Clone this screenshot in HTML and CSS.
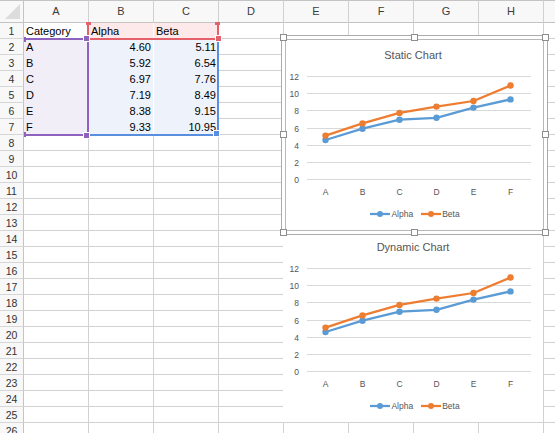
FILE: index.html
```html
<!DOCTYPE html>
<html lang="en">
<head>
<meta charset="utf-8">
<title>Sheet with charts</title>
<link rel="stylesheet" href="styles.css">
</head>
<body>
<div class="sheet">
  <div class="row head">
    <div class="rh corner"></div>
    <div class="ch">A</div><div class="ch">B</div><div class="ch">C</div><div class="ch">D</div><div class="ch">E</div><div class="ch">F</div><div class="ch">G</div><div class="ch">H</div><div class="ch"></div>
  </div>
  <div class="row"><div class="rh">1</div><div class="c">Category</div><div class="c pink split">Alpha</div><div class="c pink">Beta</div><div class="c"></div><div class="c"></div><div class="c"></div><div class="c"></div><div class="c"></div><div class="c"></div></div>
  <div class="row"><div class="rh">2</div><div class="c purple">A</div><div class="c blue split num">4.60</div><div class="c blue num">5.11</div><div class="c"></div><div class="c"></div><div class="c"></div><div class="c"></div><div class="c"></div><div class="c"></div></div>
  <div class="row"><div class="rh">3</div><div class="c purple">B</div><div class="c blue split num">5.92</div><div class="c blue num">6.54</div><div class="c"></div><div class="c"></div><div class="c"></div><div class="c"></div><div class="c"></div><div class="c"></div></div>
  <div class="row"><div class="rh">4</div><div class="c purple">C</div><div class="c blue split num">6.97</div><div class="c blue num">7.76</div><div class="c"></div><div class="c"></div><div class="c"></div><div class="c"></div><div class="c"></div><div class="c"></div></div>
  <div class="row"><div class="rh">5</div><div class="c purple">D</div><div class="c blue split num">7.19</div><div class="c blue num">8.49</div><div class="c"></div><div class="c"></div><div class="c"></div><div class="c"></div><div class="c"></div><div class="c"></div></div>
  <div class="row"><div class="rh">6</div><div class="c purple">E</div><div class="c blue split num">8.38</div><div class="c blue num">9.15</div><div class="c"></div><div class="c"></div><div class="c"></div><div class="c"></div><div class="c"></div><div class="c"></div></div>
  <div class="row"><div class="rh">7</div><div class="c purple">F</div><div class="c blue split num">9.33</div><div class="c blue num">10.95</div><div class="c"></div><div class="c"></div><div class="c"></div><div class="c"></div><div class="c"></div><div class="c"></div></div>
  <div class="row"><div class="rh">8</div><div class="c"></div><div class="c"></div><div class="c"></div><div class="c"></div><div class="c"></div><div class="c"></div><div class="c"></div><div class="c"></div><div class="c"></div></div>
  <div class="row"><div class="rh">9</div><div class="c"></div><div class="c"></div><div class="c"></div><div class="c"></div><div class="c"></div><div class="c"></div><div class="c"></div><div class="c"></div><div class="c"></div></div>
  <div class="row"><div class="rh">10</div><div class="c"></div><div class="c"></div><div class="c"></div><div class="c"></div><div class="c"></div><div class="c"></div><div class="c"></div><div class="c"></div><div class="c"></div></div>
  <div class="row"><div class="rh">11</div><div class="c"></div><div class="c"></div><div class="c"></div><div class="c"></div><div class="c"></div><div class="c"></div><div class="c"></div><div class="c"></div><div class="c"></div></div>
  <div class="row"><div class="rh">12</div><div class="c"></div><div class="c"></div><div class="c"></div><div class="c"></div><div class="c"></div><div class="c"></div><div class="c"></div><div class="c"></div><div class="c"></div></div>
  <div class="row"><div class="rh">13</div><div class="c"></div><div class="c"></div><div class="c"></div><div class="c"></div><div class="c"></div><div class="c"></div><div class="c"></div><div class="c"></div><div class="c"></div></div>
  <div class="row"><div class="rh">14</div><div class="c"></div><div class="c"></div><div class="c"></div><div class="c"></div><div class="c"></div><div class="c"></div><div class="c"></div><div class="c"></div><div class="c"></div></div>
  <div class="row"><div class="rh">15</div><div class="c"></div><div class="c"></div><div class="c"></div><div class="c"></div><div class="c"></div><div class="c"></div><div class="c"></div><div class="c"></div><div class="c"></div></div>
  <div class="row"><div class="rh">16</div><div class="c"></div><div class="c"></div><div class="c"></div><div class="c"></div><div class="c"></div><div class="c"></div><div class="c"></div><div class="c"></div><div class="c"></div></div>
  <div class="row"><div class="rh">17</div><div class="c"></div><div class="c"></div><div class="c"></div><div class="c"></div><div class="c"></div><div class="c"></div><div class="c"></div><div class="c"></div><div class="c"></div></div>
  <div class="row"><div class="rh">18</div><div class="c"></div><div class="c"></div><div class="c"></div><div class="c"></div><div class="c"></div><div class="c"></div><div class="c"></div><div class="c"></div><div class="c"></div></div>
  <div class="row"><div class="rh">19</div><div class="c"></div><div class="c"></div><div class="c"></div><div class="c"></div><div class="c"></div><div class="c"></div><div class="c"></div><div class="c"></div><div class="c"></div></div>
  <div class="row"><div class="rh">20</div><div class="c"></div><div class="c"></div><div class="c"></div><div class="c"></div><div class="c"></div><div class="c"></div><div class="c"></div><div class="c"></div><div class="c"></div></div>
  <div class="row"><div class="rh">21</div><div class="c"></div><div class="c"></div><div class="c"></div><div class="c"></div><div class="c"></div><div class="c"></div><div class="c"></div><div class="c"></div><div class="c"></div></div>
  <div class="row"><div class="rh">22</div><div class="c"></div><div class="c"></div><div class="c"></div><div class="c"></div><div class="c"></div><div class="c"></div><div class="c"></div><div class="c"></div><div class="c"></div></div>
  <div class="row"><div class="rh">23</div><div class="c"></div><div class="c"></div><div class="c"></div><div class="c"></div><div class="c"></div><div class="c"></div><div class="c"></div><div class="c"></div><div class="c"></div></div>
  <div class="row"><div class="rh">24</div><div class="c"></div><div class="c"></div><div class="c"></div><div class="c"></div><div class="c"></div><div class="c"></div><div class="c"></div><div class="c"></div><div class="c"></div></div>
  <div class="row"><div class="rh">25</div><div class="c"></div><div class="c"></div><div class="c"></div><div class="c"></div><div class="c"></div><div class="c"></div><div class="c"></div><div class="c"></div><div class="c"></div></div>
  <div class="row"><div class="rh">26</div><div class="c"></div><div class="c"></div><div class="c"></div><div class="c"></div><div class="c"></div><div class="c"></div><div class="c"></div><div class="c"></div><div class="c"></div></div>

  <div class="rng rng-blue"><span class="hd hd-blue-br"></span></div>
  <div class="rng rng-red"><span class="cap cap-l"></span><span class="cap cap-r"></span><span class="hd hd-red-br"></span></div>
  <div class="rng rng-purple"><span class="tick tick-t"></span><span class="tick tick-b"></span><span class="hd hd-purple-tr"></span><span class="hd hd-purple-br"></span></div>

  <div class="chart chart2">
    <div class="chart-title">Dynamic Chart</div>
    <svg class="plot" viewBox="0 0 260 130" width="260" height="130">
      <g stroke="#d9d9d9" stroke-width="1">
        <line x1="24" x2="248" y1="5.5" y2="5.5"/><line x1="24" x2="248" y1="22.5" y2="22.5"/><line x1="24" x2="248" y1="39.5" y2="39.5"/><line x1="24" x2="248" y1="57.5" y2="57.5"/><line x1="24" x2="248" y1="74.5" y2="74.5"/><line x1="24" x2="248" y1="91.5" y2="91.5"/><line x1="24" x2="248" y1="108.5" y2="108.5"/>
      </g>
      <g class="ax" text-anchor="end">
        <text x="16" y="8.5">12</text><text x="16" y="25.5">10</text><text x="16" y="42.5">8</text><text x="16" y="60.5">6</text><text x="16" y="77.5">4</text><text x="16" y="94.5">2</text><text x="16" y="111.5">0</text>
      </g>
      <g class="ax" text-anchor="middle">
        <text x="42.5" y="124.3">A</text><text x="79.5" y="124.3">B</text><text x="116.5" y="124.3">C</text><text x="153.5" y="124.3">D</text><text x="190.5" y="124.3">E</text><text x="227.5" y="124.3">F</text>
      </g>
      <polyline class="s-alpha" points="42.5,69.0 79.5,57.7 116.5,48.7 153.5,46.8 190.5,36.6 227.5,28.4"/>
      <g fill="#5b9bd5"><circle cx="42.5" cy="69.0" r="3.2"/><circle cx="79.5" cy="57.7" r="3.2"/><circle cx="116.5" cy="48.7" r="3.2"/><circle cx="153.5" cy="46.8" r="3.2"/><circle cx="190.5" cy="36.6" r="3.2"/><circle cx="227.5" cy="28.4" r="3.2"/></g>
      <polyline class="s-beta" points="42.5,64.6 79.5,52.4 116.5,41.9 153.5,35.6 190.5,30.0 227.5,14.5"/>
      <g fill="#ed7d31"><circle cx="42.5" cy="64.6" r="3.2"/><circle cx="79.5" cy="52.4" r="3.2"/><circle cx="116.5" cy="41.9" r="3.2"/><circle cx="153.5" cy="35.6" r="3.2"/><circle cx="190.5" cy="30.0" r="3.2"/><circle cx="227.5" cy="14.5" r="3.2"/></g>
    </svg>
    <div class="legend">
      <span class="lg-item"><svg class="lg-key" viewBox="0 0 20 8" width="20" height="8"><line x1="0" x2="20" y1="4" y2="4" stroke="#5b9bd5" stroke-width="2.25"/><circle cx="10" cy="4" r="3" fill="#5b9bd5"/></svg>Alpha</span>
      <span class="lg-item"><svg class="lg-key" viewBox="0 0 20 8" width="20" height="8"><line x1="0" x2="20" y1="4" y2="4" stroke="#ed7d31" stroke-width="2.25"/><circle cx="10" cy="4" r="3" fill="#ed7d31"/></svg>Beta</span>
    </div>
  </div>

  <div class="chart chart1">
    <div class="chart-title">Static Chart</div>
    <svg class="plot" viewBox="0 0 260 130" width="260" height="130">
      <g stroke="#d9d9d9" stroke-width="1">
        <line x1="24" x2="248" y1="5.5" y2="5.5"/><line x1="24" x2="248" y1="22.5" y2="22.5"/><line x1="24" x2="248" y1="39.5" y2="39.5"/><line x1="24" x2="248" y1="57.5" y2="57.5"/><line x1="24" x2="248" y1="74.5" y2="74.5"/><line x1="24" x2="248" y1="91.5" y2="91.5"/><line x1="24" x2="248" y1="108.5" y2="108.5"/>
      </g>
      <g class="ax" text-anchor="end">
        <text x="16" y="8.5">12</text><text x="16" y="25.5">10</text><text x="16" y="42.5">8</text><text x="16" y="60.5">6</text><text x="16" y="77.5">4</text><text x="16" y="94.5">2</text><text x="16" y="111.5">0</text>
      </g>
      <g class="ax" text-anchor="middle">
        <text x="42.5" y="124.3">A</text><text x="79.5" y="124.3">B</text><text x="116.5" y="124.3">C</text><text x="153.5" y="124.3">D</text><text x="190.5" y="124.3">E</text><text x="227.5" y="124.3">F</text>
      </g>
      <polyline class="s-alpha" points="42.5,69.0 79.5,57.7 116.5,48.7 153.5,46.8 190.5,36.6 227.5,28.4"/>
      <g fill="#5b9bd5"><circle cx="42.5" cy="69.0" r="3.2"/><circle cx="79.5" cy="57.7" r="3.2"/><circle cx="116.5" cy="48.7" r="3.2"/><circle cx="153.5" cy="46.8" r="3.2"/><circle cx="190.5" cy="36.6" r="3.2"/><circle cx="227.5" cy="28.4" r="3.2"/></g>
      <polyline class="s-beta" points="42.5,64.6 79.5,52.4 116.5,41.9 153.5,35.6 190.5,30.0 227.5,14.5"/>
      <g fill="#ed7d31"><circle cx="42.5" cy="64.6" r="3.2"/><circle cx="79.5" cy="52.4" r="3.2"/><circle cx="116.5" cy="41.9" r="3.2"/><circle cx="153.5" cy="35.6" r="3.2"/><circle cx="190.5" cy="30.0" r="3.2"/><circle cx="227.5" cy="14.5" r="3.2"/></g>
    </svg>
    <div class="legend">
      <span class="lg-item"><svg class="lg-key" viewBox="0 0 20 8" width="20" height="8"><line x1="0" x2="20" y1="4" y2="4" stroke="#5b9bd5" stroke-width="2.25"/><circle cx="10" cy="4" r="3" fill="#5b9bd5"/></svg>Alpha</span>
      <span class="lg-item"><svg class="lg-key" viewBox="0 0 20 8" width="20" height="8"><line x1="0" x2="20" y1="4" y2="4" stroke="#ed7d31" stroke-width="2.25"/><circle cx="10" cy="4" r="3" fill="#ed7d31"/></svg>Beta</span>
    </div>
  </div>

  <div class="frame">
    <span class="hdl h-tl"></span><span class="hdl h-tm"></span><span class="hdl h-tr"></span>
    <span class="hdl h-ml"></span><span class="hdl h-mr"></span>
    <span class="hdl h-bl"></span><span class="hdl h-bm"></span><span class="hdl h-br"></span>
  </div>
</div>
</body>
</html>
```

FILE: styles.css
```css
html, body {
  margin: 0;
  padding: 0;
  background: #fff;
  overflow: hidden;
}
body {
  width: 555px;
  height: 433px;
  font-family: "Liberation Sans", Arial, sans-serif;
}
.sheet {
  position: relative;
  width: 609px;
}
.row {
  display: flex;
  height: 16px;
}
.row > div {
  flex: none;
  box-sizing: border-box;
  height: 16px;
}
.rh {
  position: relative;
  width: 24px;
  background: #f8f8f8;
  border-right: 1px solid #c4c4c4;
  border-bottom: 1px solid #d6d6d6;
  color: #333;
  font-size: 10.5px;
  line-height: 17px;
  text-align: center;
}
.c {
  width: 65px;
  border-right: 1px solid #d2d2d2;
  border-bottom: 1px solid #d2d2d2;
  color: #000;
  font-size: 11px;
  line-height: 17px;
  padding: 0 2px;
  white-space: nowrap;
  overflow: visible;
}
.row.head {
  height: 23px;
}
.row.head > div {
  height: 23px;
  background: #f8f8f8;
  border-top: 1px solid #c4c4c4;
  border-bottom: 1px solid #c4c4c4;
}
.ch {
  width: 65px;
  border-right: 1px solid #d0d0d0;
  color: #3c3c3c;
  font-size: 11px;
  line-height: 21px;
  text-align: center;
}
.corner::after {
  content: "";
  position: absolute;
  right: 3px;
  bottom: 3px;
  width: 15px;
  height: 15px;
  background: #dcdcdc;
  clip-path: polygon(100% 0, 100% 100%, 0 100%);
}
.num { text-align: right; }
.pink { background: #fde9ea; }
.purple { background: #f2eef8; border-bottom-color: #f2eef8; }
.blue { background: #edf2fb; border-bottom-color: #edf2fb; }
.split { border-right-color: #fff; }

/* coloured range outlines drawn over the cells */
.rng {
  position: absolute;
  box-sizing: border-box;
  pointer-events: none;
}
.rng-blue {
  left: 87px; top: 38px; width: 132px; height: 98px;
  border-right: 2px solid #5a8fdf;
  border-bottom: 2px solid #5a8fdf;
}
.rng-red {
  left: 87px; top: 23px; width: 132px; height: 17px;
  border: 2px solid #e6606a;
  border-top: 0;
}
.rng-purple {
  left: 24px; top: 38px; width: 65px; height: 98px;
  border-top: 2px solid #8f63bd;
  border-right: 2px solid #8f63bd;
  border-bottom: 2px solid #8f63bd;
}
.hd {
  position: absolute;
  width: 5px;
  height: 5px;
  box-shadow: 0 0 0 1px #fff;
}
.hd-blue-br { left: 127px; top: 93px; background: #5a8fdf; }
.hd-red-br { left: 127px; top: 13px; background: #e6606a; }
.hd-purple-tr { left: 60px; top: -4px; background: #8f63bd; }
.hd-purple-br { left: 60px; top: 93px; background: #8f63bd; }
.cap {
  position: absolute;
  top: -1px;
  width: 5px;
  height: 3px;
  background: #e6606a;
}
.cap-l { left: -3px; }
.cap-r { right: -3px; }
.tick {
  position: absolute;
  left: 0;
  width: 2px;
  height: 5px;
  background: #8f63bd;
}
.tick-t { top: -3px; }
.tick-b { bottom: -3px; }

/* charts floating over the sheet */
.chart {
  position: absolute;
  left: 283px;
  width: 260px;
  height: 191px;
  background: #fff;
  display: flex;
  flex-direction: column;
}
.chart1 { top: 39px; }
.chart2 { top: 231px; }
.chart-title {
  height: 32px;
  line-height: 32px;
  text-align: center;
  font-size: 11px;
  color: #555;
}
.plot {
  display: block;
  flex: none;
}
.plot .ax text {
  font-family: "Liberation Sans", Arial, sans-serif;
  font-size: 8.5px;
  fill: #555;
}
.s-alpha, .s-beta {
  fill: none;
  stroke-width: 2.25;
  stroke-linejoin: round;
}
.s-alpha { stroke: #5b9bd5; }
.s-beta { stroke: #ed7d31; }
.legend {
  height: 25px;
  display: flex;
  justify-content: center;
  align-items: center;
  gap: 8px;
  padding-left: 4px;
  font-size: 8.5px;
  color: #555;
}
.lg-item {
  display: flex;
  align-items: center;
  gap: 1px;
}
.lg-key { display: block; }

/* selection frame around the static chart */
.frame {
  position: absolute;
  left: 281px;
  top: 35px;
  width: 267px;
  height: 200px;
  box-sizing: border-box;
  border: 1px solid #ababab;
  box-shadow: inset 0 0 0 3px #fff, inset 0 0 0 4px #b8b8b8;
  pointer-events: none;
}
.hdl {
  position: absolute;
  width: 7px;
  height: 7px;
  box-sizing: border-box;
  background: #fff;
  border: 1px solid #8e8e8e;
}
.h-tl { left: -2px; top: -2px; }
.h-tm { left: 129px; top: -2px; }
.h-tr { left: 260px; top: -2px; }
.h-ml { left: -2px; top: 95px; }
.h-mr { left: 260px; top: 95px; }
.h-bl { left: -2px; top: 193px; }
.h-bm { left: 129px; top: 193px; }
.h-br { left: 260px; top: 193px; }
```
